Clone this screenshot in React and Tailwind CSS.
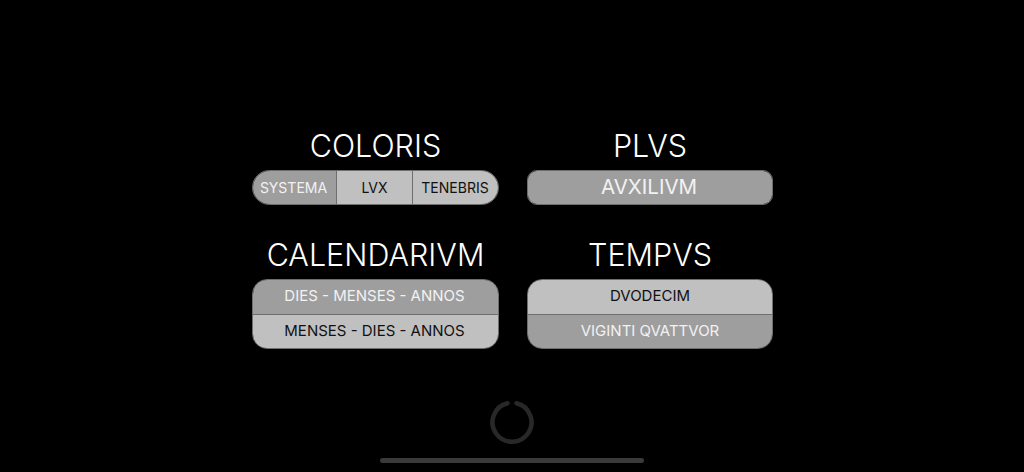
const font = { fontFamily: '"Inter", "Liberation Sans", sans-serif' };

const Title = ({ children }) => (
  <h2 className="h-[46px] pb-[2px] flex items-center justify-center text-[30.5px] font-light text-white">
    {children}
  </h2>
);

const Cell = ({ active, className = "", children }) => (
  <div
    className={`flex items-center justify-center pb-[1px] ${
      active ? "bg-[#9e9e9e] text-[#f2f2f2]" : "bg-[#c0c0c0] text-[#111111]"
    } ${className}`}
  >
    {children}
  </div>
);

const App = () => {
  return (
    <div className="w-[1024px] h-[472px] bg-black overflow-hidden flex flex-col items-center" style={font}>
      <div className="grid grid-cols-[247px_246px] gap-x-[28px] gap-y-[28px] pt-[124px] ml-[1px]">
        {/* Coloris */}
        <div>
          <Title>COLORIS</Title>
          <div className="flex h-[35px] rounded-full overflow-hidden border border-[#6e6e6e] text-[14px]">
            <Cell active className="w-[83px] pr-[2px]">SYSTEMA</Cell>
            <Cell className="w-[76px] border-l border-[#6e6e6e]">LVX</Cell>
            <Cell className="flex-1 border-l border-[#6e6e6e] pr-[1px]">TENEBRIS</Cell>
          </div>
        </div>

        {/* Plvs */}
        <div>
          <Title>PLVS</Title>
          <div className="flex h-[35px] rounded-[10px] overflow-hidden border border-[#6e6e6e] text-[20.5px]">
            <Cell active className="flex-1 pr-[2px]">AVXILIVM</Cell>
          </div>
        </div>

        {/* Calendarivm */}
        <div>
          <Title>CALENDARIVM</Title>
          <div className="flex flex-col h-[70px] rounded-[15px] overflow-hidden border border-[#6e6e6e] text-[15px]">
            <Cell active className="flex-1 pr-[2px]">DIES - MENSES - ANNOS</Cell>
            <Cell className="flex-1 border-t border-[#6e6e6e] pr-[2px]">MENSES - DIES - ANNOS</Cell>
          </div>
        </div>

        {/* Tempvs */}
        <div>
          <Title>TEMPVS</Title>
          <div className="flex flex-col h-[70px] rounded-[15px] overflow-hidden border border-[#6e6e6e] text-[15px]">
            <Cell className="flex-1">DVODECIM</Cell>
            <Cell active className="flex-1 border-t border-[#6e6e6e]">VIGINTI QVATTVOR</Cell>
          </div>
        </div>
      </div>

      {/* Loading ring */}
      <svg className="mt-[51px]" width="44" height="44" viewBox="0 0 44 44" fill="none">
        <path
          d="M 26.5 3.3 A 19.5 19.5 0 1 1 17.5 3.3"
          stroke="#282828"
          strokeWidth="4.5"
          strokeLinecap="round"
        />
      </svg>

      <div className="mt-[14px] w-[264px] h-[5px] rounded-full bg-[#3a3a3a]" />
    </div>
  );
};

export default App;
